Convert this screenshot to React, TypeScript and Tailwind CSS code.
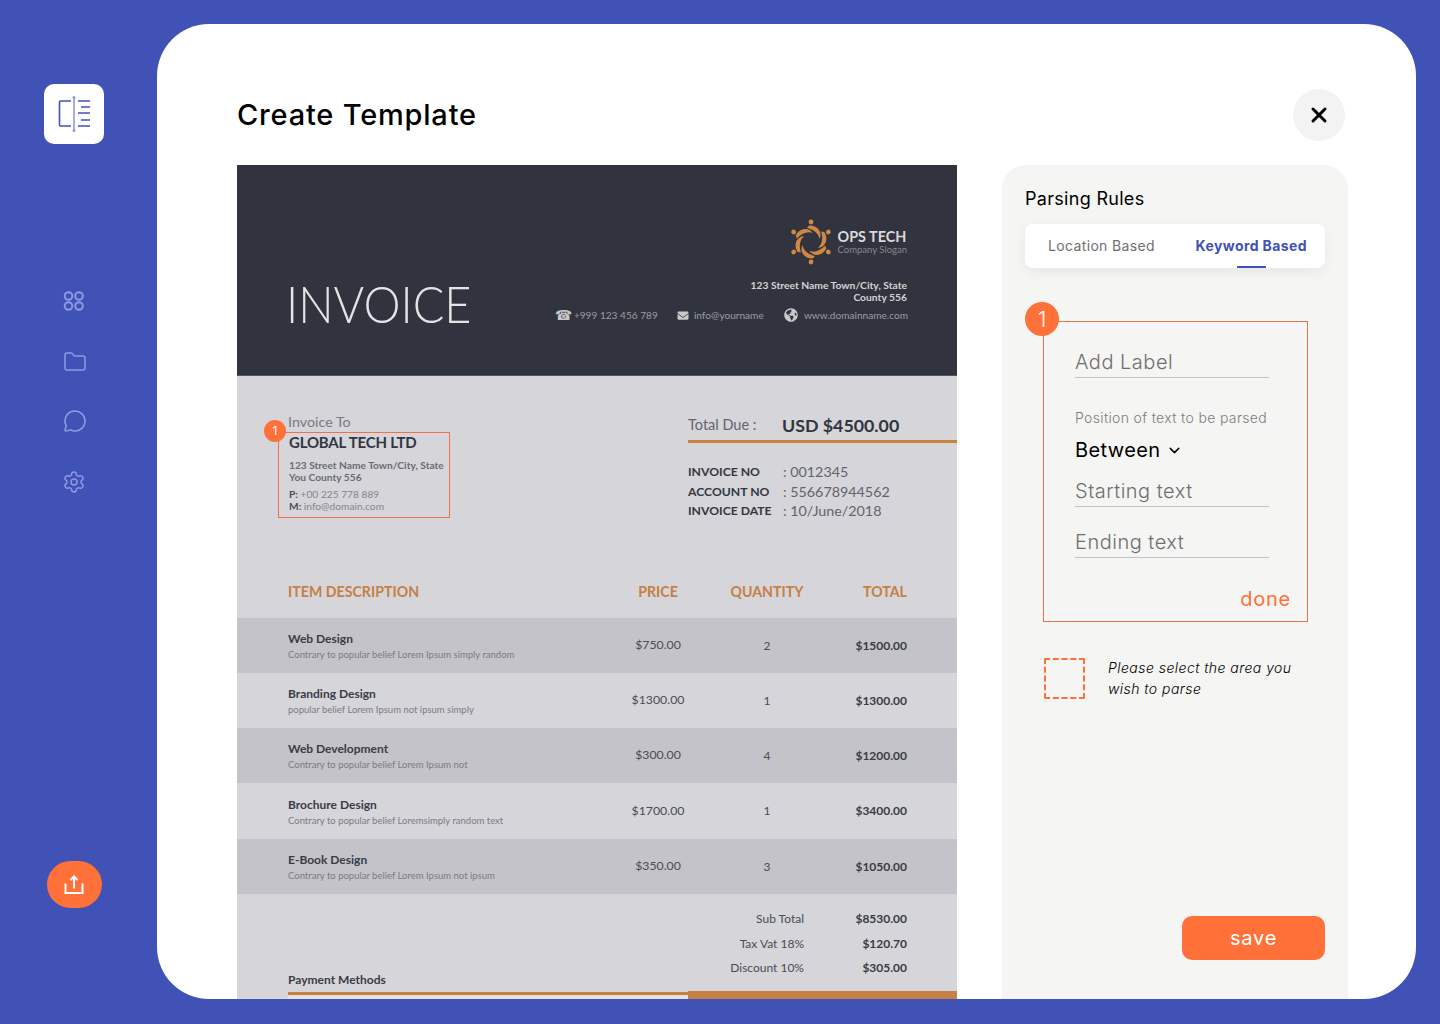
import React from "react";
import { Folder, MessageCircle, Settings, X, ChevronDown } from "lucide-react";
import { FaEnvelope, FaGlobeAmericas } from "react-icons/fa";

const rows = [
  ["Web Design", "Contrary to popular belief Lorem Ipsum simply random", "$750.00", "2", "$1500.00", "bg-[#c3c3c9] h-[55px]"],
  ["Branding Design", "popular belief Lorem Ipsum not ipsum simply", "$1300.00", "1", "$1300.00", "bg-[#d5d5da] h-[55px]"],
  ["Web Development", "Contrary to popular belief Lorem Ipsum not", "$300.00", "4", "$1200.00", "bg-[#c3c3c9] h-[55px]"],
  ["Brochure Design", "Contrary to popular belief Loremsimply random text", "$1700.00", "1", "$3400.00", "bg-[#d5d5da] h-[56px]"],
  ["E-Book Design", "Contrary to popular belief Lorem Ipsum not ipsum", "$350.00", "3", "$1050.00", "bg-[#c3c3c9] h-[55px]"],
];

function SwirlLogo() {
  return (
    <svg width="42" height="46" viewBox="-21 -23 42 46" fill="none">
      {[0, 60, 120, 180, 240, 300].map((a) => (
        <g key={a} transform={`rotate(${a})`}>
          <circle cx="0" cy="-20" r="2.400" fill="#d08a45" />
          <path d="M-2 -16.500 C 7 -17 12 -9 8.500 -3 C 8 -8 3 -12.500 -4 -14 Z" fill="#cf8743" />
        </g>
      ))}
    </svg>
  );
}

function Invoice() {
  return (
    <div className="w-[720px] shrink-0 h-full overflow-hidden bg-[#d5d5da] font-['Lato',sans-serif]">
      <div className="h-[211px] bg-[#31343e] border-b border-[#55575e] flex justify-between pl-[49px] pr-[49px]">
        <div className="pt-[107px] text-[52px] leading-[62px] font-light text-[#e4e4e6] scale-x-[0.9] origin-left">INVOICE</div>
        <div className="flex flex-col items-end pt-[54px]">
          <div className="flex items-center gap-[6px] h-[46px] mr-[1px]">
            <SwirlLogo />
            <div className="flex flex-col">
              <span className="text-[14.400px] leading-[15px] font-bold text-[#d9d9db]">OPS TECH</span>
              <span className="text-[9.500px] leading-[11px] text-[#85878d]">Company Slogan</span>
            </div>
          </div>
          <div className="mt-[14px] mr-[1px] text-[10.300px] leading-[12px] font-bold text-[#d3d3d5] text-right">
            123 Street Name Town/City, State
            <br />
            County 556
          </div>
          <div className="mt-[5px] flex items-center text-[10.100px] leading-[14px] text-[#9a9ca1]">
            <span className="text-[14px] leading-[14px] w-[19px] text-[#c9c9cb] font-['DejaVu_Sans',sans-serif]">☎</span>
            <span className="w-[102px]">+999 123 456 789</span>
            <FaEnvelope className="text-[#c9c9cb] w-[14px] h-[11px] mr-[4px]" />
            <span className="w-[90px]">info@yourname</span>
            <FaGlobeAmericas className="text-[#c9c9cb] w-[14px] h-[14px] mr-[6px]" />
            <span>www.domainname.com</span>
          </div>
        </div>
      </div>

      <div className="h-[242px] flex">
        <div className="w-[451px] pl-[51px] pt-[37px] text-[#5d5e66]">
          <div className="relative">
            <div className="text-[14.300px] leading-[18px] text-[#797a82]">Invoice To</div>
            <div className="text-[15px] leading-[20px] font-bold tracking-[-0.2px] text-[#34363f] ml-[1px] mt-[1px]">GLOBAL TECH LTD</div>
            <div className="ml-[1px] mt-[7px] text-[10.200px] leading-[12px] font-bold text-[#6a6b73]">
              123 Street Name Town/City, State
              <br />
              You County 556
            </div>
            <div className="ml-[1px] mt-[5px] text-[10.200px] leading-[12px] text-[#85868d]">
              <b className="text-[#4c4d55]">P:</b> +00 225 778 889
              <br />
              <b className="text-[#4c4d55]">M:</b> info@domain.com
            </div>
            <div className="absolute left-[-10px] top-[19px] w-[172px] h-[86px] border border-[#f0704a]" />
            <div className="absolute left-[-24px] top-[7px] w-[22px] h-[22px] rounded-full bg-[#ff7139] text-white text-[12px] leading-[22px] text-center font-['Inter',sans-serif]">1</div>
          </div>
        </div>
        <div className="flex-1 pt-[35px]">
          <div className="flex items-center h-[28px] border-b-[3px] border-[#c9813f] box-content pb-[1px] text-[#63646c]">
            <span className="text-[14.500px] w-[94px]">Total Due :</span>
            <span className="text-[17.800px] font-bold text-[#33353e]">USD $4500.00</span>
          </div>
          <div className="mt-[19px] grid grid-cols-[95px_1fr] text-[12.200px] leading-[19.500px] font-bold text-[#34363f]">
            <span>INVOICE NO</span>
            <span className="font-normal text-[14.300px] text-[#63646c]">: 0012345</span>
            <span>ACCOUNT NO</span>
            <span className="font-normal text-[14.300px] text-[#63646c]">: 556678944562</span>
            <span>INVOICE DATE</span>
            <span className="font-normal text-[14.300px] text-[#63646c]">: 10/June/2018</span>
          </div>
        </div>
      </div>

      <div className="grid grid-cols-[310px_120px_98px_91px] ml-[51px] text-[14.200px] font-bold text-[#c67f44] items-center pb-[17px] -mt-[35px] leading-[18px]">
        <span>ITEM DESCRIPTION</span>
        <span className="text-center">PRICE</span>
        <span className="text-center">QUANTITY</span>
        <span className="text-right">TOTAL</span>
      </div>

      {rows.map((r) => (
        <div key={r[0]} className={`grid grid-cols-[310px_120px_98px_91px] pl-[51px] items-center ${r[5]}`}>
          <div>
            <div className="text-[12px] leading-[15px] font-bold text-[#3a3c45]">{r[0]}</div>
            <div className="mt-[3px] text-[9.500px] leading-[11px] text-[#7b7c84]">{r[1]}</div>
          </div>
          <span className="text-center text-[12.300px] text-[#4b4c54]">{r[2]}</span>
          <span className="text-center text-[12px] text-[#4b4c54]">{r[3]}</span>
          <span className="text-right text-[12px] font-bold text-[#3a3c45]">{r[4]}</span>
        </div>
      ))}

      <div className="pt-[13px] ml-[51px] w-[619px] grid grid-cols-[516px_103px] text-[12px] leading-[24.500px] text-[#4b4c54] text-right">
        <span>Sub Total</span>
        <span className="font-bold text-[#3a3c45]">$8530.00</span>
        <span>Tax Vat 18%</span>
        <span className="font-bold text-[#3a3c45]">$120.70</span>
        <span>Discount 10%</span>
        <span className="font-bold text-[#3a3c45]">$305.00</span>
      </div>
      <div className="ml-[51px] -mt-[9px] text-[12px] leading-[16px] font-bold text-[#3a3c45]">Payment Methods</div>
      <div className="flex items-start mt-[3px] h-[10px]">
        <div className="ml-[51px] w-[400px] h-[10px] bg-[#e6e3df] border-t-[3px] border-[#c67f44] mt-[1px]" />
        <div className="flex-1 h-[10px] bg-[#c67f44]" />
      </div>
    </div>
  );
}

function Field({ label, className }: { label: string; className: string }) {
  return (
    <div className={`w-[194px] border-b border-[#c4c4c4] text-[20px] leading-[30px] text-[#6f6f6f] font-light tracking-[0.5px] ${className}`}>{label}</div>
  );
}

function Panel() {
  return (
    <div className="w-[346px] shrink-0 h-[860px] rounded-t-[24px] bg-[#f5f5f3] px-[23px] pt-[21px] flex flex-col">
      <div className="text-[18px] leading-[26px] text-black tracking-[0.3px]">Parsing Rules</div>
      <div className="mt-[12px] h-[44px] w-[300px] rounded-[8px] bg-white shadow-[0_4px_12px_rgba(0,0,0,0.06)] flex items-center justify-between pl-[23px] pr-[18px] pb-[2px] relative">
        <span className="text-[14px] text-[#6f6f6f] tracking-[0.35px]">Location Based</span>
        <span className="text-[14px] font-bold text-[#4152b6] tracking-[0.4px]">Keyword Based</span>
        <span className="absolute left-[212px] bottom-0 w-[29px] h-[2px] bg-[#4152b6]" />
      </div>
      <div className="relative mt-[53px] ml-[18px] w-[265px] h-[301px] border border-[#e8734a] pl-[31px] flex flex-col">
        <div className="absolute -left-[19px] -top-[20px] w-[34px] h-[34px] rounded-full bg-[#ff7139] text-white text-[22px] leading-[34px] text-center font-light">1</div>
        <Field label="Add Label" className="mt-[25px]" />
        <div className="mt-[29px] text-[14px] leading-[21px] text-[#7d7d7d] font-light whitespace-nowrap tracking-[0.35px]">Position of text to be parsed</div>
        <div className="mt-[7px] flex items-center gap-[5px] text-[20px] leading-[30px] text-black tracking-[0.4px]">
          Between <ChevronDown size={17} strokeWidth={2} />
        </div>
        <Field label="Starting text" className="mt-[11px]" />
        <Field label="Ending text" className="mt-[20px]" />
        <div className="mt-[26px] mr-[16px] text-right text-[20px] leading-[30px] text-[#ff7139] tracking-[0.75px]">done</div>
      </div>
      <div className="mt-[36px] ml-[19px] flex items-start">
        <div className="w-[41px] h-[41px] rounded-[2px] border-2 border-dashed border-[#ff7139] shrink-0" />
        <div className="ml-[23px] text-[14px] leading-[21px] italic font-light text-black -mt-[1px] tracking-[0.45px]">
          Please select the area you
          <br />
          wish to parse
        </div>
      </div>
      <button className="mt-[217px] self-end w-[143px] h-[44px] rounded-[10px] bg-[#ff7139] text-white text-[20px] leading-[30px] tracking-[0.8px]">save</button>
    </div>
  );
}

export default function App() {
  return (
    <div className="h-[1024px] w-[1440px] overflow-hidden bg-[#4152b6] flex items-start font-['Inter',sans-serif]">
      <aside className="w-[157px] h-full shrink-0 flex flex-col items-center pr-[9px] pt-[84px]">
        <div className="w-[60px] h-[60px] rounded-[10px] bg-white flex items-center justify-center">
          <svg width="36" height="36" viewBox="0 0 36 36" fill="none">
            <path d="M15 5H4.500A1 1 0 0 0 3.500 6V29A1 1 0 0 0 4.500 30H15" stroke="#4152b6" strokeWidth="1.600" />
            <path d="M22 5H34M25 11H34M22 17H34M25 24H34M22 30H34" stroke="#4152b6" strokeWidth="1.600" />
            <path d="M18 1V35" stroke="#8e99dc" strokeWidth="1.600" />
            <circle cx="18" cy="1.500" r="1.500" fill="#8e99dc" />
            <circle cx="18" cy="34.500" r="1.500" fill="#8e99dc" />
          </svg>
        </div>
        <svg className="mt-[146px]" width="22" height="22" viewBox="0 0 22 22" fill="none" stroke="#8e99e2" strokeWidth="2">
          <circle cx="5.500" cy="6" r="3.800" />
          <circle cx="16" cy="6" r="3.800" />
          <circle cx="5.500" cy="16" r="3.800" />
          <circle cx="16" cy="16" r="3.800" />
        </svg>
        <Folder className="mt-[38px] ml-[2px] text-[#8e99e2]" size={24} strokeWidth={1.5} />
        <MessageCircle className="mt-[35px] ml-[1px] text-[#8e99e2]" size={24} strokeWidth={1.6} />
        <Settings className="mt-[37px] text-[#8e99e2]" size={24} strokeWidth={1.5} />
        <button className="mt-[367px] w-[55px] h-[47px] rounded-[24px] bg-[#ff7139] flex items-center justify-center">
          <svg width="22" height="22" viewBox="0 0 22 22" fill="none" stroke="white" strokeWidth="2">
            <path d="M11 14.500V2.500M7.500 6L11 2.500L14.500 6" />
            <path d="M2.500 9.500V19H19.500V9.500" />
          </svg>
        </button>
      </aside>
      <main className="mt-[24px] w-[1259px] h-[975px] rounded-[52px] bg-white overflow-hidden pl-[80px] pr-[68px] pt-[65px] flex flex-col">
        <div className="flex items-center justify-between h-[52px] shrink-0">
          <h1 className="text-[29px] font-medium text-black leading-[42px] tracking-[0.8px]">Create Template</h1>
          <div className="w-[52px] h-[52px] mr-[3px] rounded-full bg-[#f3f3f3] flex items-center justify-center">
            <X size={24} strokeWidth={3} className="text-black" />
          </div>
        </div>
        <div className="mt-[24px] flex justify-between flex-1 min-h-0">
          <Invoice />
          <Panel />
        </div>
      </main>
    </div>
  );
}
